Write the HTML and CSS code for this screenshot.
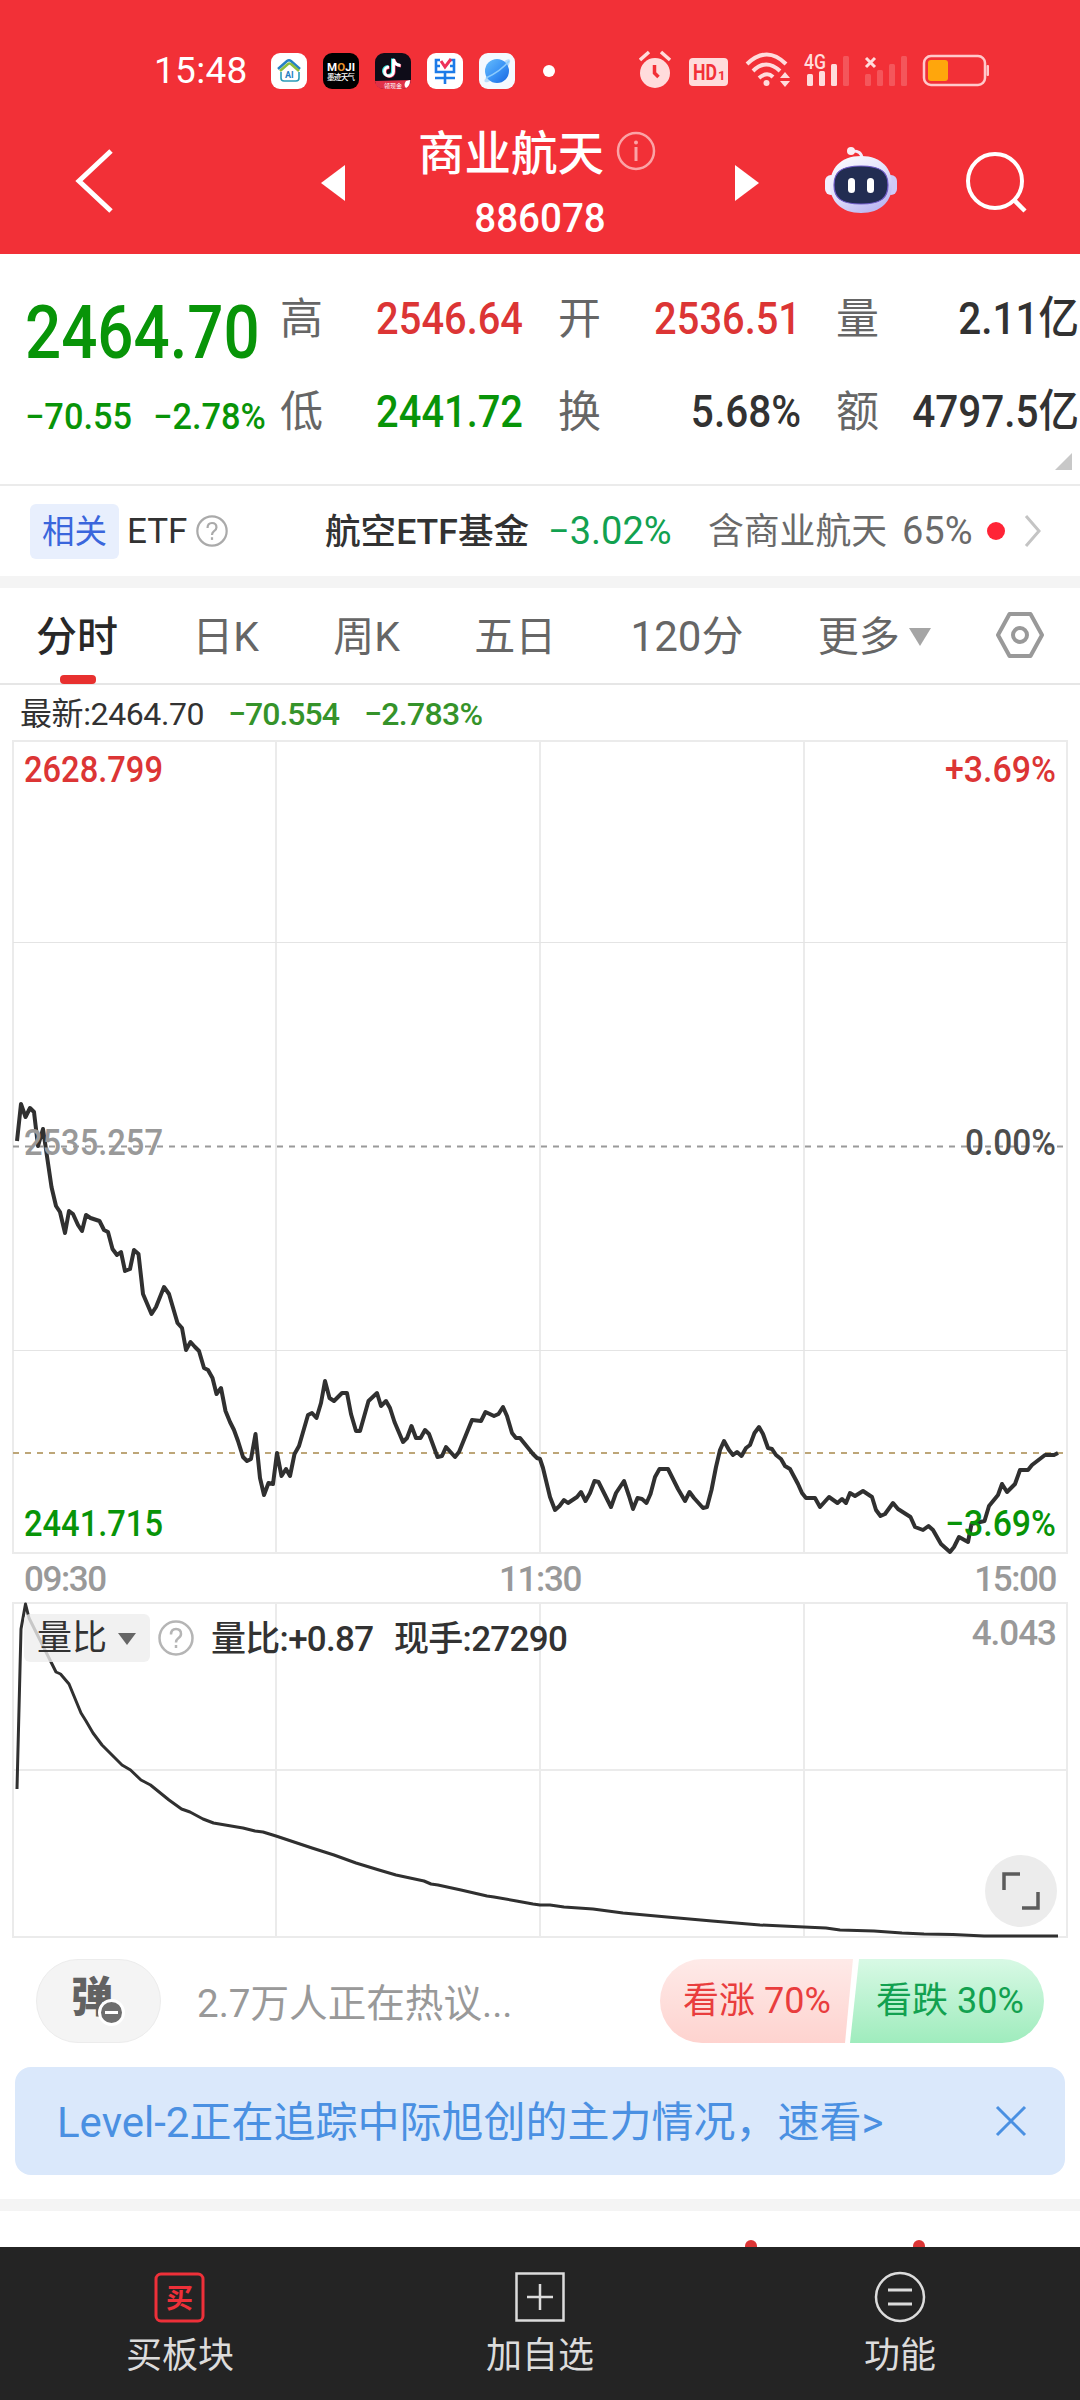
FILE: index.html
```html
<!DOCTYPE html>
<html lang="zh-CN">
<head>
    <meta charset="UTF-8">
    <meta name="viewport" content="width=device-width, initial-scale=1.0">
    <title>商业航天 886078</title>
    <link rel="stylesheet" href="styles.css">
</head>
<body>
    <header class="header">
        <div class="status-bar">
            <span class="clock">15:48</span>
            <div class="apps">
                <svg class="app" viewBox="0 0 36 36">
                    <rect width="36" height="36" rx="9" fill="#fff"/>
                    <path d="M7 16L16 8q2-1.5 4 0l9 8" fill="none" stroke="#2580c4" stroke-width="2.5"/>
                    <path d="M9 18l8-7q1-1 3 0l8 7" fill="none" stroke="#8bbf3f" stroke-width="2.5"/>
                    <path d="M10 19v6q0 3 3 3h12q3 0 3-3v-6" fill="none" stroke="#2a9bb8" stroke-width="1.6"/>
                    <text x="14" y="25" font-size="9" font-weight="700" fill="#2580c4">AI</text>
                </svg>
                <svg class="app" viewBox="0 0 36 36">
                    <rect width="36" height="36" rx="9" fill="#000"/>
                    <text x="4" y="18" font-size="11.5" font-weight="700" fill="#fff" textLength="28">M<tspan fill="#e8952c">O</tspan>JI</text>
                    <text x="4" y="27" font-size="7.5" font-weight="500" fill="#fff" textLength="28">墨迹天气</text>
                </svg>
                <svg class="app" viewBox="0 0 36 36">
                    <rect width="36" height="36" rx="9" fill="#0e0c18"/>
                    <path d="M18.500 6v12.500a4.500 4.500 0 1 1-4.500-4.500M18.500 6q1 6 7 6.500" transform="translate(-1 -.6)" fill="none" stroke="#3ce5e4" stroke-width="3"/>
                    <path d="M18.500 6v12.500a4.500 4.500 0 1 1-4.500-4.500M18.500 6q1 6 7 6.500" transform="translate(.6 .4)" fill="none" stroke="#f5345c" stroke-width="3"/>
                    <path d="M18.500 6v12.500a4.500 4.500 0 1 1-4.500-4.500M18.500 6q1 6 7 6.500" fill="none" stroke="#fff" stroke-width="2.8"/>
                    <path d="M0 28l36-1v0q0 9-9 9H9q-8 0-9-8z" fill="#e03048"/>
                    <text x="9" y="34.5" font-size="6" fill="#fff">领现金</text>
                    <path d="M31 28l4-1q0 6-4 8-3-3 0-7z" fill="#fff"/>
                </svg>
                <svg class="app" viewBox="0 0 36 36">
                    <rect width="36" height="36" rx="9" fill="#fff"/>
                    <path d="M13 7H9v12h18V7h-4M8 25h20M18 19v12M9 13h4M23 13h4" fill="none" stroke="#1c7be8" stroke-width="2.6"/>
                    <path d="M14 8l4 6 6-8" fill="none" stroke="#ee3158" stroke-width="3"/>
                </svg>
                <svg class="app" viewBox="0 0 36 36">
                    <defs>
                        <linearGradient id="planet" x1="0" y1="0" x2="1" y2="1">
                            <stop offset="0" stop-color="#67bdfb"/>
                            <stop offset=".5" stop-color="#3c95f6"/>
                            <stop offset="1" stop-color="#1765e0"/>
                        </linearGradient>
                    </defs>
                    <rect width="36" height="36" rx="9" fill="#f4f9ff"/>
                    <path d="M27 7q5-2 4 2-3 10-22 20-5 1-3-3z" fill="#b7dcfb"/>
                    <circle cx="18" cy="18" r="12" fill="url(#planet)"/>
                    <path d="M7 25Q22 18 30 8" fill="none" stroke="#8ccbfd" stroke-width="1.5"/>
                </svg>
            </div>
            <span class="more-dot"></span>
            <svg class="system-icons" viewBox="0 0 350 40">
                <!-- 闹钟 -->
                <g fill="#ffdcdc">
                    <circle cx="16" cy="23" r="15"/>
                    <path d="M1 10l9-8M31 10l-9-8" stroke="#ffdcdc" stroke-width="3.5"/>
                    <path d="M15.500 15v8l4 4" fill="none" stroke="#f23037" stroke-width="3.5"/>
                    <rect x="50" y="8" width="39" height="28" rx="4"/>
                    <text x="54" y="30" font-size="22" font-weight="700" fill="#f23037" textLength="24" lengthAdjust="spacingAndGlyphs">HD</text>
                    <text x="79" y="30" font-size="13" font-weight="700" fill="#f23037">1</text>
                </g>
                <!-- 无线网络 -->
                <g fill="none" stroke="#ffdcdc" stroke-width="4">
                    <path d="M108 14q20-19 39 0M114 21q13-13 27 0M120 28q8-7 14-1"/>
                    <circle cx="127.5" cy="33" r="3" fill="#ffdcdc" stroke="none"/>
                    <path d="M141 28l5-6 5 6zM141 31l5 6 5-6z" fill="#ffdcdc" stroke="none"/>
                </g>
                <!-- 双卡信号 -->
                <g fill="#ffdcdc">
                    <text x="165" y="19" font-size="21" font-weight="500" textLength="22" lengthAdjust="spacingAndGlyphs">4G</text>
                    <rect x="168" y="24" width="6" height="12" rx="1.5"/>
                    <rect x="180" y="21" width="6" height="15" rx="1.5"/>
                    <rect x="192" y="14" width="6" height="22" rx="1.5"/>
                    <g opacity=".22">
                        <rect x="204" y="6" width="6" height="30" rx="1.5"/>
                        <rect x="226" y="24" width="6" height="12" rx="1.5"/>
                        <rect x="238" y="20" width="6" height="16" rx="1.5"/>
                        <rect x="250" y="14" width="6" height="22" rx="1.5"/>
                        <rect x="262" y="6" width="6" height="30" rx="1.5"/>
                    </g>
                    <path d="M227 8l9 9M236 8l-9 9" stroke="#ffdcdc" stroke-width="3"/>
                </g>
                <!-- 电池 -->
                <rect x="285" y="6" width="61" height="29" rx="7" fill="none" stroke="#ffc9cb" stroke-width="2.5"/>
                <rect x="289" y="10" width="20" height="21" rx="3" fill="#ffa60c"/>
                <rect x="347.5" y="15" width="2.5" height="11" rx="1" fill="#ffc9cb"/>
            </svg>
        </div>

        <div class="title-bar">
            <svg class="back" viewBox="0 0 40 66"><path d="M36 3L4 33l32 30" fill="none" stroke="#fff" stroke-width="5"/></svg>
            <svg class="prev" viewBox="0 0 24 36"><path d="M24 0v36L0 18z" fill="#fff"/></svg>
            <div class="title">
                <div class="title-name">商业航天
                    <svg class="title-info" viewBox="0 0 40 40">
                        <circle cx="20" cy="20" r="18" fill="none" stroke="#fba3a6" stroke-width="2.5"/>
                        <path d="M20 16v14" stroke="#fba3a6" stroke-width="3"/>
                        <circle cx="20" cy="11.5" r="2" fill="#fba3a6"/>
                    </svg>
                </div>
                <div class="title-code">886078</div>
            </div>
            <svg class="next" viewBox="0 0 24 36"><path d="M0 0v36l24-18z" fill="#fff"/></svg>
            <svg class="robot" viewBox="0 0 72 68">
                <defs>
                    <linearGradient id="robotHead" x1="0" y1="0" x2=".6" y2="1">
                        <stop offset="0" stop-color="#fff"/>
                        <stop offset=".55" stop-color="#e3e2fb"/>
                        <stop offset="1" stop-color="#bdb9f2"/>
                    </linearGradient>
                </defs>
                <path d="M26 5q11-1 11 8" fill="none" stroke="#f5eafa" stroke-width="3"/>
                <circle cx="26" cy="5" r="4" fill="#fbeef5"/>
                <rect x="0" y="29" width="12" height="20" rx="6" fill="#f3efff"/>
                <rect x="60" y="29" width="12" height="20" rx="6" fill="#cfcaf7"/>
                <path d="M36 10C57 10 67 23 67 39S56 67 36 67 5 55 5 39 15 10 36 10z" fill="url(#robotHead)"/>
                <path d="M36 20c20 0 27 6 27 19s-7 19-27 19S9 52 9 39s7-19 27-19z" fill="#222d52" stroke="#6f5bc8" stroke-width="1.2"/>
                <rect x="23" y="32" width="7" height="15" rx="3.5" fill="#fff"/>
                <rect x="42" y="32" width="7" height="15" rx="3.5" fill="#fff"/>
            </svg>
            <svg class="search" viewBox="0 0 64 64">
                <circle cx="30" cy="30" r="27" fill="none" stroke="#fff" stroke-width="4"/>
                <path d="M49 49l11 11" stroke="#fff" stroke-width="4.5"/>
            </svg>
        </div>
    </header>

    <section class="quote">
        <div class="quote-main">
            <div class="price">2464.70</div>
            <div class="change"><span>−70.55</span><span>−2.78%</span></div>
        </div>
        <div class="quote-grid">
            <div class="cell"><label>高</label><span class="value up">2546.64</span></div>
            <div class="cell"><label>开</label><span class="value up">2536.51</span></div>
            <div class="cell"><label>量</label><span class="value">2.11亿</span></div>
            <div class="cell"><label>低</label><span class="value down">2441.72</span></div>
            <div class="cell"><label>换</label><span class="value">5.68%</span></div>
            <div class="cell"><label>额</label><span class="value">4797.5亿</span></div>
        </div>
        <svg class="quote-corner" viewBox="0 0 17 17"><path d="M17 0v17H0z" fill="#c8c8c8"/></svg>
    </section>

    <section class="etf">
        <span class="etf-tag">相关</span>
        <span class="etf-label">ETF</span>
        <svg class="help" viewBox="0 0 36 36"><circle cx="18" cy="18" r="16.5"/><path d="M13 14.500q0-5.500 5-5.500t5 5q0 2.500-3 4.500-2 1.500-2 4"/><path d="M18 25v3"/></svg>
        <span class="etf-name">航空ETF基金</span>
        <span class="etf-change">−3.02%</span>
        <span class="etf-hold">含商业航天</span>
        <span class="etf-ratio">65%</span>
        <span class="etf-dot"></span>
        <svg class="etf-arrow" viewBox="0 0 18 32"><path d="M2 1l13 15L2 31" fill="none" stroke="#c4c4c4" stroke-width="3"/></svg>
    </section>

    <nav class="tabs">
        <span class="tab active">分时</span>
        <span class="tab">日K</span>
        <span class="tab">周K</span>
        <span class="tab">五日</span>
        <span class="tab minute">120分</span>
        <span class="tab">更多<i class="caret"></i></span>
        <svg class="settings" viewBox="0 0 50 48">
            <path d="M14.500 3h21L47 24 35.500 45h-21L3 24z" fill="none" stroke="#999" stroke-width="4" stroke-linejoin="round"/>
            <circle cx="25" cy="24" r="7" fill="none" stroke="#999" stroke-width="4"/>
        </svg>
    </nav>

    <div class="latest">
        <span class="latest-price">最新:2464.70</span>
        <span class="latest-diff">−70.554</span>
        <span class="latest-rate">−2.783%</span>
    </div>

    <!-- 分时走势 -->
    <svg class="chart" viewBox="0 739 1080 816">
        <path class="grid-line" d="M13 741H1067V1553H13zM276 741V1553M540 741V1553M804 741V1553"/>
        <path class="grid-line thin" d="M13 942.500H1067M13 1350.500H1067"/>
        <path class="base-line" d="M13 1146.500H1063"/>
        <path class="now-line" d="M13 1453H1063"/>
        <polyline class="trend" points="17,1141 21,1104 25.5,1117 30,1108 34,1112 38,1146 43,1129 51.5,1187 56,1206 60,1212 65,1233 69,1211 73,1214 78,1225 82,1231 86,1215 90.5,1218 99.5,1221 104,1230 108,1232 112.5,1249 117,1255 121,1252 125,1271 130,1269 134,1250 138.5,1254 143,1294 151.5,1314 156,1307 164,1287 169,1294 177.5,1323 182,1328 186,1350 190.5,1342 195,1347 199,1351 204,1368 208,1370 212.5,1378 216.5,1394 221,1388 225.5,1411 230,1422 234,1430 238,1441 243,1457 247,1461 251,1459 255.5,1434 260,1478 264,1495 268.5,1483 273,1484 277,1453 281.5,1476 286,1469 290,1476 294.5,1454 299,1446 308,1415 312,1413 316.5,1418 321,1403 325,1381 329.5,1398 334,1401 342,1393 347,1393 351,1414 356,1431 360,1431 368.5,1401 377,1393 381,1406 386,1401 390,1408 394.5,1422 403,1442 407,1438 411.5,1426 416,1438 420.5,1438 425,1430 429,1434 437.5,1457 442,1456 446,1447 455,1457 459,1452 472,1420 481,1421 485.5,1412 494,1416 498.5,1414 503,1407 507,1416 512,1433 516,1438 520,1438 533,1454 537,1458 540,1459 543,1468 550,1497 555,1510 559.5,1506 564,1500 568,1503 577,1497 581,1492 585.5,1501 590,1493 594.5,1481 598.5,1482 611,1507 616,1493 624,1481 629,1496 633,1509 637.5,1498 642,1499 646.5,1503 650.5,1494 655,1477 659.5,1469 668,1469 678,1489 685,1501 689.5,1492 694,1498 703,1508 707,1507 711.5,1490 716,1467 720,1450 724,1441 729,1450 733,1455 737,1452 741.5,1456 746,1448 750,1445 754.5,1433 759,1427 763,1434 768,1448 772,1449 776,1455 781,1459 785,1466 790,1469 798,1484 802,1493 806,1498 815,1498 820,1507 829,1497 837.5,1503 842,1499 846,1503 850,1493 855,1496 863,1491 872,1497 876,1510 880.5,1516 885,1514 893,1503 898,1509 910.5,1517 915,1527 923,1530 928.5,1526 933,1530 941,1544 950,1552 954,1547 959,1537 968,1542 971.5,1524 984.5,1521 989,1506 998,1495 1002,1484 1007,1492 1015,1484 1020,1470 1028,1470 1032,1465 1045,1455 1054,1455 1058,1453"/>
        <g class="axis-text">
            <text class="up" x="24" y="782" textLength="139" lengthAdjust="spacingAndGlyphs">2628.799</text>
            <text class="up" x="945" y="782" textLength="111" lengthAdjust="spacingAndGlyphs">+3.69%</text>
            <text class="mid" x="24" y="1155" textLength="139" lengthAdjust="spacingAndGlyphs">2535.257</text>
            <text class="zero" x="965" y="1155" textLength="91" lengthAdjust="spacingAndGlyphs">0.00%</text>
            <text class="down" x="24" y="1536" textLength="139" lengthAdjust="spacingAndGlyphs">2441.715</text>
            <text class="down" x="945" y="1536" textLength="111" lengthAdjust="spacingAndGlyphs">−3.69%</text>
        </g>
    </svg>

    <div class="time-axis"><span>09:30</span><span>11:30</span><span>15:00</span></div>

    <!-- 量比 -->
    <div class="volume">
        <svg class="volume-chart" viewBox="0 1602 1080 337">
            <path class="grid-line" d="M13 1603H1067V1937H13zM276 1603V1937M540 1603V1937M804 1603V1937M13 1770H1067"/>
            <polyline class="ratio" points="17,1789 21,1629 25.5,1604 29,1618 51,1662 56,1672 60.5,1674 69,1684 81,1713 86,1721 93,1733 102,1745 114,1757 122,1765 130.5,1770 141,1780 150.5,1785 169,1800 181.5,1809 190,1812 203,1819 213.5,1823 237,1827 243,1828 255,1831 263,1832 276,1836 300,1844 312,1848 334,1855 356,1863 379,1870 396,1875 424,1881 431,1884 438,1885 461,1890 487,1896 494,1897 516.5,1901 533,1904 540,1905 550,1905 564,1907 593,1909 623,1913 667,1917 712,1921 760,1925 804,1927 826,1928 840,1930 874,1931 902,1933 924,1934 953,1934.5 984,1936 1058,1936"/>
        </svg>
        <div class="volume-head">
            <span class="volume-chip">量比<i class="caret dark"></i></span>
            <svg class="help" viewBox="0 0 36 36"><circle cx="18" cy="18" r="16.5"/><path d="M13 14.500q0-5.500 5-5.500t5 5q0 2.500-3 4.500-2 1.500-2 4"/><path d="M18 25v3"/></svg>
            <span class="volume-text ratio-text">量比:+0.87</span>
            <span class="volume-text">现手:27290</span>
            <span class="volume-max">4.043</span>
        </div>
        <div class="expand">
            <svg viewBox="0 0 38 38"><path d="M2 18V2h16M36 20v16H20" fill="none" stroke="#5c5c5c" stroke-width="3.5"/></svg>
        </div>
    </div>

    <section class="talk">
        <div class="danmu">弹<i class="danmu-off"></i></div>
        <span class="talk-text">2.7万人正在热议...</span>
        <div class="vote">
            <span class="vote-up">看涨 70%</span>
            <span class="vote-down">看跌 30%</span>
        </div>
    </section>

    <div class="banner">
        <span>Level-2正在追踪中际旭创的主力情况，速看&gt;</span>
        <svg class="close" viewBox="0 0 32 32"><path d="M2 2l28 28M30 2L2 30" stroke="#4a90e2" stroke-width="3"/></svg>
    </div>

    <div class="next-card"><i></i><i></i></div>

    <footer class="bottom-bar">
        <div class="action">
            <svg viewBox="0 0 52 52">
                <rect x="2" y="3" width="47" height="47" rx="5" fill="none" stroke="#ee3039" stroke-width="3"/>
                <text x="12" y="37" font-size="27" font-weight="700" fill="#ee3039">买</text>
            </svg>
            <span>买板块</span>
        </div>
        <div class="action">
            <svg viewBox="0 0 52 52"><path d="M2.500 2.500h47v47h-47zM26 13v26M13 26h26" fill="none" stroke="#dcdcdc" stroke-width="2.5"/></svg>
            <span>加自选</span>
        </div>
        <div class="action">
            <svg viewBox="0 0 52 52">
                <circle cx="26" cy="26" r="24" fill="none" stroke="#dcdcdc" stroke-width="2.5"/>
                <path d="M14 19h24M14 33h24" stroke="#dcdcdc" stroke-width="2.8"/>
            </svg>
            <span>功能</span>
        </div>
    </footer>
</body>
</html>
```
FILE: styles.css
```css
* {
    box-sizing: border-box;
}
body {
    width: 1080px;
    height: 2400px;
    margin: 0;
    overflow: hidden;
    background-color: #fff;
    color: #323232;
    font-family: Roboto, "Noto Sans CJK SC", sans-serif;
    display: flex;
    flex-direction: column;
}
body > * {
    flex-shrink: 0;
}
svg {
    display: block;
    flex-shrink: 0;
}
span, label {
    white-space: nowrap;
}
.up {
    color: #dc3535;
    fill: #dc3535;
}
.down {
    color: #089408;
    fill: #089408;
}

/* 顶部 */
.header {
    height: 254px;
    background-color: #f23037;
    color: #fff;
}
.status-bar {
    height: 108px;
    padding: 34px 0 0 154px;
    display: flex;
    align-items: center;
}
.clock {
    width: 117px;
    font-size: 37px;
    line-height: 40px;
    letter-spacing: 0.3px;
}
.apps {
    display: flex;
    gap: 16px;
}
.app {
    width: 36px;
    height: 36px;
}
.more-dot {
    width: 12px;
    height: 12px;
    margin-left: 28px;
    border-radius: 50%;
    background-color: #fff;
}
.system-icons {
    width: 350px;
    height: 40px;
    margin-left: 84px;
    margin-top: -2px;
}
.title-bar {
    height: 146px;
    padding-left: 75px;
    display: flex;
    align-items: center;
}
.back {
    width: 40px;
    height: 66px;
}
.prev {
    width: 24px;
    height: 36px;
    margin-left: 206px;
    margin-top: 4px;
}
.title {
    width: 390px;
    padding-top: 8px;
}
.title-name {
    display: flex;
    align-items: center;
    gap: 12px;
    padding-left: 73px;
    font-size: 46.5px;
    line-height: 65px;
    font-weight: 500;
}
.title-info {
    width: 40px;
    height: 40px;
    margin-top: -6px;
}
.title-code {
    text-align: center;
    font-size: 41px;
    line-height: 62px;
    font-weight: 500;
    transform: scaleX(0.94);
}
.next {
    width: 24px;
    height: 36px;
    margin-top: 4px;
}
.robot {
    width: 72px;
    height: 68px;
    margin-left: 66px;
    margin-top: -3px;
}
.search {
    width: 64px;
    height: 64px;
    margin-left: 68px;
    margin-top: 3px;
}

/* 行情 */
.quote {
    position: relative;
    height: 232px;
    padding-left: 25px;
    border-bottom: 2px solid #ebebeb;
    display: flex;
}
.quote-main {
    width: 255px;
    color: #089408;
}
.price {
    margin-top: 41px;
    font-size: 74px;
    line-height: 76px;
    font-weight: 500;
    transform: scaleX(0.86);
    transform-origin: left;
}
.change {
    margin-top: 26px;
    display: flex;
    gap: 22px;
    font-size: 36px;
    line-height: 40px;
    font-weight: 500;
    transform: scaleX(0.955);
    transform-origin: left;
}
.quote-grid {
    width: 799px;
    height: 188px;
    padding-top: 18px;
    display: grid;
    grid-template-columns: repeat(3, 1fr);
    grid-auto-rows: 93px;
    column-gap: 35px;
}
.cell {
    display: flex;
    align-items: center;
    justify-content: space-between;
    line-height: 60px;
}
.cell label {
    font-size: 43px;
    color: #666;
}
.value {
    width: 0;
    display: flex;
    justify-content: flex-end;
    font-size: 45px;
    font-weight: 500;
    transform: scaleX(0.9);
    transform-origin: right;
}
.value.up, .value.down {
    transform: scaleX(0.885);
}
.quote-corner {
    position: absolute;
    right: 8px;
    bottom: 14px;
    width: 17px;
    height: 17px;
}

/* 相关ETF */
.etf {
    height: 102px;
    padding: 0 38px 0 30px;
    border-bottom: 12px solid #f4f4f4;
    display: flex;
    align-items: center;
    font-size: 36px;
    line-height: 56px;
}
.etf-tag {
    width: 89px;
    height: 55px;
    margin-right: 8px;
    border-radius: 6px;
    background-color: #e8effd;
    color: #3a66dc;
    font-size: 32.5px;
    text-align: center;
}
.etf-label {
    width: 69px;
    padding-top: 2px;
    font-size: 35px;
}
.help {
    width: 32px;
    height: 32px;
    fill: none;
    stroke: #aaa;
    stroke-width: 2.5;
}
.etf-name {
    width: 223px;
    margin-left: 97px;
    padding-top: 2px;
    font-size: 35.6px;
    font-weight: 500;
}
.etf-change {
    width: 160px;
    color: #12a150;
    font-size: 38px;
}
.etf-hold {
    width: 194px;
    padding-top: 2px;
    color: #6a6a6a;
    font-size: 35.8px;
}
.etf-ratio {
    width: 85px;
    color: #6a6a6a;
    font-size: 38px;
}
.etf-dot {
    width: 18px;
    height: 18px;
    border-radius: 50%;
    background-color: #ff2436;
}
.etf-arrow {
    width: 18px;
    height: 32px;
    margin-left: 19px;
}

/* 周期切换 */
.tabs {
    height: 97px;
    padding: 2px 35px 0 36px;
    border-bottom: 2px solid #e6e6e6;
    display: flex;
    align-items: center;
    justify-content: space-between;
    color: #666;
    font-size: 41px;
    line-height: 60px;
}
.tab {
    position: relative;
    display: flex;
    align-items: center;
}
.tab.minute {
    font-size: 42px;
}
.active {
    color: #282828;
    font-weight: 500;
}
.active::after {
    content: "";
    position: absolute;
    left: 24px;
    bottom: -17px;
    width: 36px;
    height: 9px;
    border-radius: 4px;
    background-color: #e8302f;
}
.caret {
    margin-left: 9px;
    border: 11px solid transparent;
    border-top: 18px solid #a5a5a5;
    border-bottom: 0;
}
.caret.dark {
    margin-left: 11px;
    border-width: 12px 9px 0;
    border-top-color: #666;
}
.settings {
    width: 50px;
    height: 48px;
    margin-left: -10px;
    margin-top: -3px;
}

.latest {
    height: 54px;
    padding: 5px 20px 0;
    display: flex;
    align-items: center;
    font-size: 32px;
    line-height: 49px;
    font-weight: 500;
    color: #35932a;
}
.latest-price {
    width: 208px;
    color: #323232;
    letter-spacing: -0.4px;
    font-weight: 400;
}
.latest-diff {
    width: 136px;
    letter-spacing: -1px;
}
.latest-rate {
    letter-spacing: -0.7px;
}

/* 走势图 */
.chart {
    width: 1080px;
    height: 816px;
}
.grid-line {
    fill: none;
    stroke: #ebebeb;
    stroke-width: 2;
}
.grid-line.thin {
    stroke: #e4e4e4;
    stroke-width: 1;
}
.base-line {
    stroke: #9a9a9a;
    stroke-width: 2;
    stroke-dasharray: 6 6;
}
.now-line {
    stroke: #bda678;
    stroke-width: 2;
    stroke-dasharray: 6 6;
}
.trend, .ratio {
    fill: none;
    stroke: #303030;
    stroke-width: 4;
    stroke-linejoin: round;
}
.ratio {
    stroke-width: 3;
}
.axis-text {
    font-size: 36px;
    font-weight: 500;
}
.mid {
    fill: #999;
}
.zero {
    fill: #4d4d4d;
}
.time-axis {
    height: 47px;
    padding: 1px 24px 0;
    display: flex;
    justify-content: space-between;
    color: #999;
    font-size: 35px;
    line-height: 47px;
    font-weight: 500;
    letter-spacing: -1.4px;
}

/* 量比 */
.volume {
    position: relative;
    height: 337px;
}
.volume-chart {
    width: 1080px;
    height: 337px;
}
.volume-head {
    position: absolute;
    top: 12px;
    left: 24px;
    right: 24px;
    height: 48px;
    display: flex;
    align-items: center;
    font-size: 35px;
    line-height: 50px;
}
.volume-chip {
    width: 126px;
    height: 48px;
    padding: 2px 0 0 13px;
    border-radius: 6px;
    background-color: rgba(238, 238, 238, 0.8);
    display: flex;
    align-items: center;
}
.volume-head .help {
    width: 36px;
    height: 36px;
    margin-left: 8px;
    stroke: #b5b5b5;
}
.volume-text {
    margin-left: 17px;
    padding-top: 3px;
    letter-spacing: -0.7px;
    font-weight: 500;
}
.ratio-text {
    width: 166px;
}
.volume-max {
    margin: -8px 0 0 auto;
    color: #999;
    font-weight: 500;
    letter-spacing: -1px;
}
.expand {
    position: absolute;
    top: 253px;
    left: 985px;
    width: 72px;
    height: 72px;
    border-radius: 50%;
    background-color: #ececec;
    display: flex;
    align-items: center;
    justify-content: center;
}
.expand svg {
    width: 38px;
    height: 38px;
}

/* 热议 */
.talk {
    height: 84px;
    margin: 20px 36px 24px;
    display: flex;
    align-items: center;
}
.danmu {
    position: relative;
    width: 125px;
    height: 84px;
    border-radius: 42px;
    border: 1px solid #ececec;
    background-color: #f4f4f4;
    color: #626262;
    font-size: 42px;
    line-height: 76px;
    font-weight: 900;
    padding-left: 34px;
}
.danmu-off {
    position: absolute;
    left: 61px;
    top: 39px;
    width: 27px;
    height: 27px;
    border: 3px solid #fff;
    border-radius: 50%;
    background: linear-gradient(#fff, #fff) center / 13px 3px no-repeat #6e6e6e;
}
.talk-text {
    margin-left: 36px;
    margin-top: -2px;
    color: #999;
    font-size: 38.6px;
}
.vote {
    margin-left: auto;
    display: flex;
    font-size: 36px;
    line-height: 85px;
}
.vote-up {
    width: 193px;
    height: 84px;
    padding-left: 23px;
    border-radius: 42px 0 0 42px;
    background: linear-gradient(#feeae8, #fed3cf);
    clip-path: polygon(0 0, 193px 0, 185px 100%, 0 100%);
    color: #e93d3d;
}
.vote-down {
    width: 194px;
    height: 84px;
    margin-left: -3px;
    padding-left: 26px;
    border-radius: 0 42px 42px 0;
    background: linear-gradient(#d8f9e5, #9fecbd);
    clip-path: polygon(9px 0, 100% 0, 100% 100%, 0 100%);
    color: #12a150;
}

.banner {
    height: 108px;
    margin: 0 15px 24px;
    padding: 0 38px 0 42px;
    border-radius: 16px;
    background-color: #dae8fb;
    color: #4a90e2;
    font-size: 42px;
    line-height: 111px;
    display: flex;
    align-items: center;
    justify-content: space-between;
}
.banner span {
    padding-top: 2px;
}
.close {
    width: 32px;
    height: 32px;
}

.next-card {
    height: 48px;
    padding-left: 745px;
    border-top: 12px solid #f4f4f4;
    overflow: hidden;
    display: flex;
    gap: 156px;
}
.next-card i {
    width: 12px;
    height: 12px;
    margin-top: 29px;
    border-radius: 50%;
    background-color: #dc3535;
}

/* 底部操作栏 */
.bottom-bar {
    height: 153px;
    background-color: #242424;
    display: flex;
}
.action {
    flex: 1;
    padding-top: 24px;
    display: flex;
    flex-direction: column;
    align-items: center;
    color: #dcdcdc;
    font-size: 36px;
    line-height: 54px;
}
.action svg {
    width: 52px;
    height: 52px;
    margin-bottom: 6px;
}
```
